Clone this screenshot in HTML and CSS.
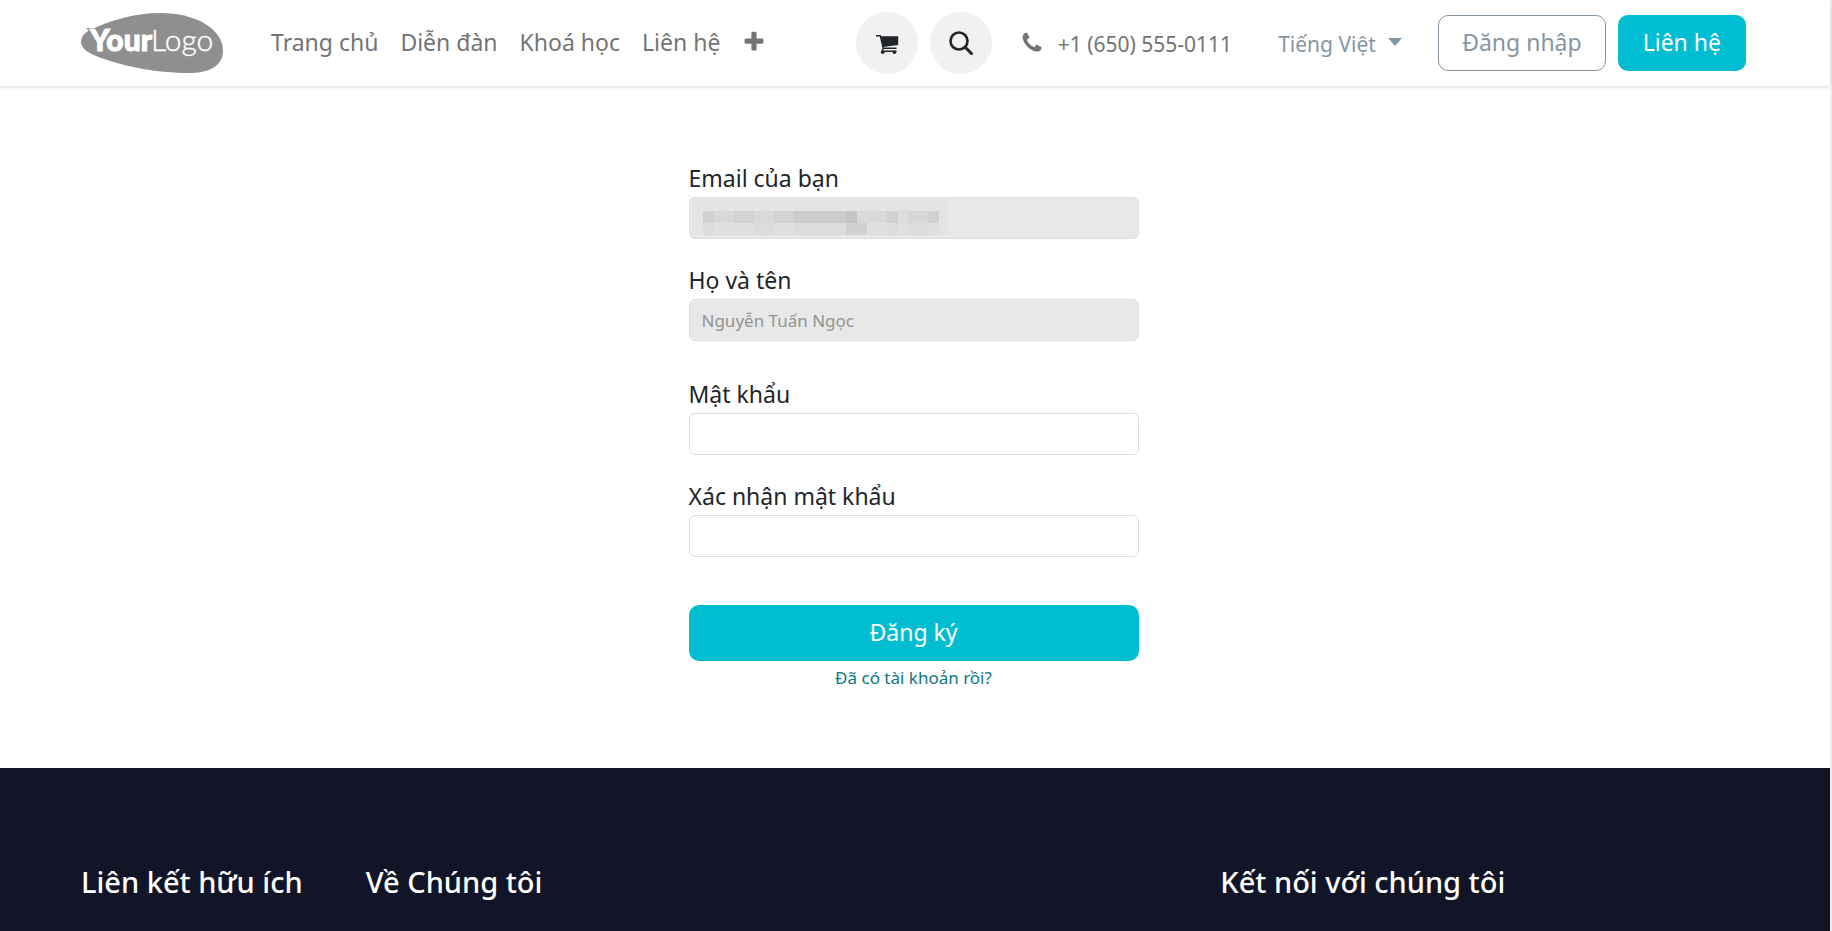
FILE: index.html
```html
<!DOCTYPE html>
<html lang="vi">
<head>
<meta charset="utf-8">
<meta name="viewport" content="width=device-width, initial-scale=1">
<title>Đăng ký</title>
<link rel="stylesheet" href="styles.css">
</head>
<body>
<div class="page">
  <header class="site-header">
    <a class="brand" href="#" aria-label="YourLogo">
      <svg class="brand-logo" viewBox="0 0 142 60" width="142" height="60">
        <path d="M0 29 C0 24 3 20 9 17 C28 8 52 0 79 0 C115 0 142 16 142 38 C142 52 130 60 107 60 C70 60 35 51 15 43 C5 39 0 34 0 29Z" fill="#8f8f8f"/>
        <path d="M5 15 L14 15 L11 21Z" fill="#8f8f8f"/>
        <text class="logo-bold" x="9" y="38">Your</text>
        <text class="logo-light" x="70" y="38">Logo</text>
      </svg>
    </a>
    <nav class="main-nav" aria-label="Menu">
      <a class="nav-link" href="#">Trang chủ</a>
      <a class="nav-link" href="#">Diễn đàn</a>
      <a class="nav-link" href="#">Khoá học</a>
      <a class="nav-link" href="#">Liên hệ</a>
      <button class="nav-more" type="button" aria-label="Thêm">
        <svg viewBox="0 0 1792 1792" width="24" height="24"><path fill="currentColor" d="M1600 736v192q0 40-28 68t-68 28h-416v416q0 40-28 68t-68 28h-192q-40 0-68-28t-28-68v-416h-416q-40 0-68-28t-28-68v-192q0-40 28-68t68-28h416v-416q0-40 28-68t68-28h192q40 0 68 28t28 68v416h416q40 0 68 28t28 68z"/></svg>
      </button>
    </nav>
    <div class="header-tools">
      <a class="round" href="#" aria-label="Giỏ hàng">
        <svg viewBox="0 0 24 24" width="24" height="24">
          <path d="M1 4.700H5.200L8.200 17.200L7 20.300H21.500M8 17.200H21.500" fill="none" stroke="currentColor" stroke-width="1.400"/>
          <path d="M5.800 5.300H23.200V14L7.800 16Z" fill="currentColor"/>
          <circle cx="7.700" cy="21.300" r="1.800" fill="currentColor"/>
          <circle cx="19.500" cy="21.300" r="1.800" fill="currentColor"/>
        </svg>
      </a>
      <button class="round" type="button" aria-label="Tìm kiếm">
        <svg viewBox="0 0 24 24" width="24" height="24" fill="none" stroke="currentColor" stroke-width="2.600"><circle cx="10" cy="10" r="8.500"/><path d="M16 16l7.500 7.500" stroke-width="3"/></svg>
      </button>
      <a class="phone" href="tel:+16505550111">
        <svg viewBox="0 0 1792 1792" width="24" height="24"><path fill="currentColor" d="M1600 1240q0 27-10 70.500t-21 68.500q-21 50-122 106-94 51-186 51-27 0-53-3.500t-57.500-12.500-47-14.500-55.500-20.500-49-18q-98-35-175-83-127-79-264-216t-216-264q-48-77-83-175-3-9-18-49t-20.500-55.500-14.500-47-12.500-57.500-3.500-53q0-92 51-186 56-101 106-122 25-11 68.500-21t70.500-10q14 0 21 3 18 6 53 76 11 19 30 54t35 63.500 31 53.500q3 4 17.500 25t21.500 35.500 7 28.500q0 20-28.500 50t-62 55-62 53-28.500 46q0 9 5 22.500t8.500 20.500 14 24 11.500 19q76 137 174 235t235 174q2 1 19 11.500t24 14 20.500 8.500 22.500 5q18 0 46-28.500t53-62 55-62 50-28.500q14 0 28.500 7t35.500 21.500 25 17.500q25 15 53.500 31t63.500 35 54 30q70 35 76 53 3 7 3 21z"/></svg>
        <span class="phone-number">+1 (650) 555-0111</span>
      </a>
      <label class="language">
        <select class="language-select" aria-label="Ngôn ngữ"><option>Tiếng Việt</option></select>
        <svg class="caret" viewBox="0 0 14 8" width="14" height="8"><path d="M0 0h14L7 8z" fill="currentColor"/></svg>
      </label>
      <div class="actions">
        <a class="btn btn-outline" href="#">Đăng nhập</a>
        <a class="btn btn-primary" href="#">Liên hệ</a>
      </div>
    </div>
  </header>

  <main class="content">
    <form class="signup">
      <div class="field-set">
        <div class="field">
          <label for="email">Email của bạn</label>
          <div class="masked">
            <input id="email" type="email" disabled>
            <svg class="mosaic" viewBox="0 0 260 38" width="260" height="38" shape-rendering="crispEdges">
              <path fill="#e4e4e4" d="M4 1h256v36H4z"/>
              <path fill="#d0d1d1" d="M14 13h11v12H14z"/>
              <path fill="#d8d9d9" d="M25 13h20v12H25z"/>
              <path fill="#d2d3d3" d="M45 13h20v12H45z"/>
              <path fill="#d8d9d9" d="M65 13h20v12H65z"/>
              <path fill="#d2d2d3" d="M85 13h20v12H85z"/>
              <path fill="#ccc" d="M105 13h52v12h-52z"/>
              <path fill="#c4c5c5" d="M157 13h11v12h-11z"/>
              <path fill="#d8d9da" d="M168 13h30v12h-30z"/>
              <path fill="#cfd0d0" d="M198 13h11v12h-11z"/>
              <path fill="#dcdddd" d="M209 13h10v12h-10z"/>
              <path fill="#d6d6d5" d="M219 13h20v12h-20z"/>
              <path fill="#d0d0d0" d="M239 13h11v12h-11z"/>
              <path fill="#dcdcdc" d="M14 25h11v12H14zM65 25h20v12H65zM105 25h52v12h-52zM198 25h11v12h-11zM219 25h20v12h-20z"/>
              <path fill="#e0e0e0" d="M25 25h40v12H25zM85 25h20v12H85zM178 25h20v12h-20zM209 25h10v12h-10zM239 25h11v12h-11z"/>
              <path fill="#d1d1d0" d="M157 25h21v12h-21z"/>
            </svg>
          </div>
        </div>
        <div class="field">
          <label for="name">Họ và tên</label>
          <input id="name" type="text" value="Nguyễn Tuấn Ngọc" disabled>
        </div>
      </div>
      <div class="field-set">
        <div class="field">
          <label for="password">Mật khẩu</label>
          <input id="password" type="password">
        </div>
        <div class="field">
          <label for="confirm">Xác nhận mật khẩu</label>
          <input id="confirm" type="password">
        </div>
      </div>
      <div class="submit">
        <button class="btn btn-primary" type="submit">Đăng ký</button>
        <a class="login-link" href="#">Đã có tài khoản rồi?</a>
      </div>
    </form>
  </main>

  <footer class="site-footer">
    <h2>Liên kết hữu ích</h2>
    <h2 class="about">Về Chúng tôi</h2>
    <h2 class="connect">Kết nối với chúng tôi</h2>
  </footer>
</div>
</body>
</html>
```
FILE: styles.css
```css
* {
  box-sizing: border-box;
}

body {
  margin: 0;
  background: #f1f1f1;
  color: #212529;
  font-family: "Noto Sans", "Open Sans", sans-serif;
  font-size: 23px;
  line-height: 36px;
}

a {
  color: inherit;
  text-decoration: none;
}

button,
input,
select {
  font: inherit;
}

svg {
  display: block;
}

.page {
  display: flex;
  flex-direction: column;
  min-height: 100vh;
  margin-right: 2px;
  background: #fff;
}

.site-header {
  display: flex;
  align-items: center;
  height: 86px;
  padding: 0 84px 0 81px;
  color: #727573;
  box-shadow: 0 1px 4px rgba(0, 0, 0, 0.15);
}

.logo-bold,
.logo-light {
  fill: #fff;
  stroke: #fff;
  font-family: Lato, sans-serif;
  font-size: 30px;
}

.logo-bold {
  stroke-width: 1px;
  font-weight: 900;
}

.logo-light {
  stroke-width: 0.4px;
  font-weight: 300;
}

.main-nav {
  display: flex;
  align-items: center;
  gap: 22px;
  margin-left: 48px;
}

.nav-link {
  padding-bottom: 2px;
}

.nav-more {
  padding: 0 0 2px;
  border: 0;
  background: none;
  color: inherit;
}

.header-tools {
  display: flex;
  align-items: center;
  gap: 12px;
  margin-left: auto;
}

.round {
  display: grid;
  place-items: center;
  width: 62px;
  height: 62px;
  padding: 0;
  border: 0;
  border-radius: 50%;
  background: #f1f1f1;
  color: #212529;
}

.phone {
  display: flex;
  align-items: center;
  gap: 14px;
  margin-left: 16px;
  font-size: 21px;
}

.phone-number {
  padding-top: 2px;
}

.language {
  display: flex;
  align-items: center;
  gap: 12px;
  margin-left: 34px;
  color: #8595a2;
  font-size: 21px;
}

.language-select {
  padding: 2px 0 0;
  border: 0;
  appearance: none;
  background: none;
  color: inherit;
}

.caret {
  margin-bottom: 3px;
}

.actions {
  display: flex;
  gap: 12px;
  margin-left: 24px;
}

.btn {
  padding: 8px 23px 10px;
  border: 1px solid transparent;
  border-radius: 10px;
  text-align: center;
}

.btn-outline {
  border-color: #8595a2;
  color: #8595a2;
}

.btn-primary {
  padding-inline: 24px;
  background: #00bdd1;
  color: #fff;
}

.content {
  padding: 75px 27px 77px 24px;
}

.signup {
  display: flex;
  flex-direction: column;
  gap: 36px;
  max-width: 450px;
  margin: 0 auto;
}

.field-set {
  display: flex;
  flex-direction: column;
  gap: 24px;
}

.field {
  display: flex;
  flex-direction: column;
}

.field label {
  padding-bottom: 2px;
  line-height: 34px;
}

.field input {
  width: 100%;
  height: 42px;
  padding: 6px 12px;
  border: 1px solid #dcdfe0;
  border-radius: 6px;
  background: #fff;
  color: #212529;
  font-size: 17px;
}

.field input:disabled {
  background: #e8e8e8;
  color: #939393;
}

.masked {
  display: flex;
  position: relative;
}

.mosaic {
  position: absolute;
  top: 1px;
  left: 0;
}

.submit {
  display: flex;
  flex-direction: column;
  gap: 3px;
  margin-top: 12px;
}

.login-link {
  align-self: center;
  color: #0c7885;
  font-size: 17px;
  line-height: 27px;
}

.site-footer {
  display: grid;
  flex: 1;
  grid-template-columns: repeat(6, 1fr);
  column-gap: 44px;
  align-items: start;
  padding: 96px 84px 30px 81px;
  background: #121527;
  color: #fff;
}

.site-footer h2 {
  margin: 0;
  font-size: 29px;
  font-weight: 500;
  line-height: 36px;
  white-space: nowrap;
}

.about {
  grid-column: 2 / span 3;
}

.connect {
  grid-column: 5 / span 2;
}
```
